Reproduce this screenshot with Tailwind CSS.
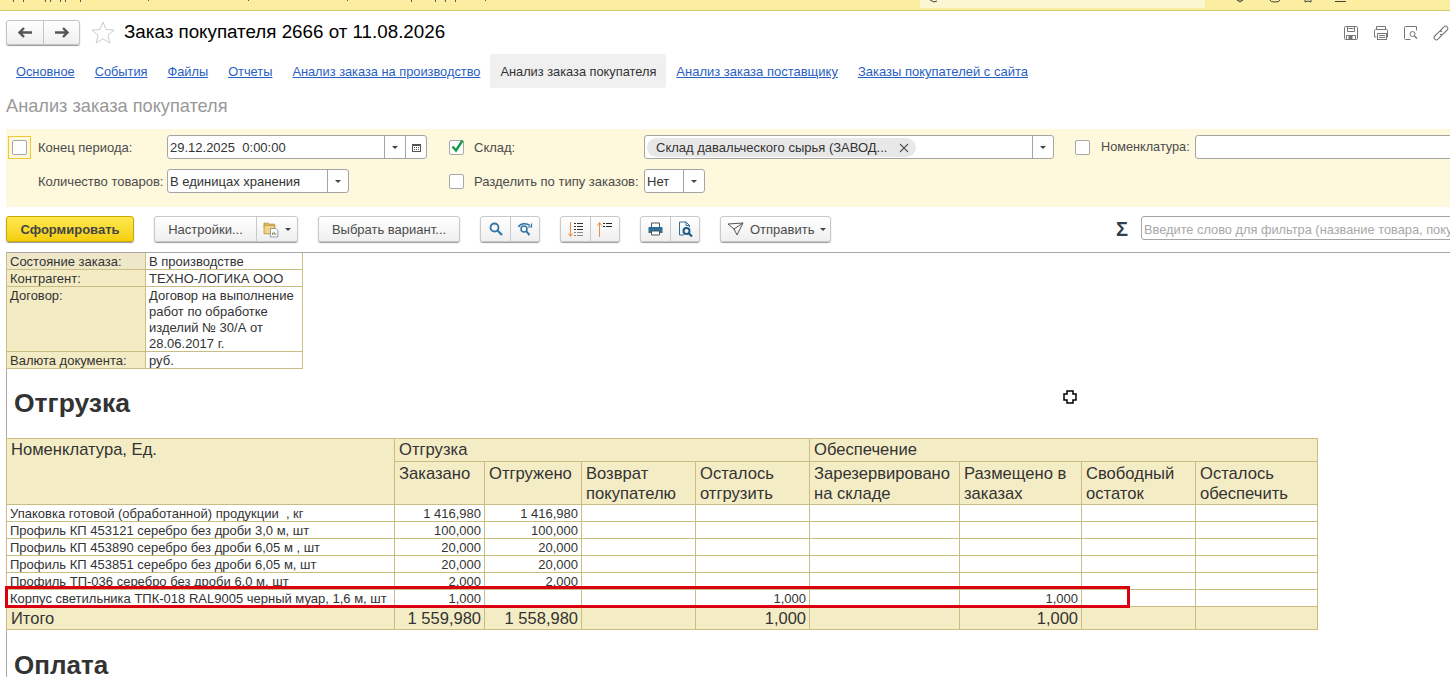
<!DOCTYPE html>
<html lang="ru">
<head>
    <meta charset="UTF-8">
    <title>Заказ покупателя 2666</title>
    <script src="https://cdn.jsdelivr.net/npm/@tailwindcss/browser@4"></script>
</head>
<body class="relative w-[1450px] h-[677px] overflow-hidden bg-white font-['Liberation_Sans',Arial,sans-serif] text-[#333]">

    <!-- Верхняя полоса -->
    <div class="relative h-[11px] bg-[#fbeea1] border-b border-[#d8c86c] flex justify-end pr-[245px]">
        <div class="w-[285px] h-[8px] bg-[#fdf6d3] rounded-b-[3px]"></div>
        <svg class="absolute left-0 top-0" width="1450" height="4" viewBox="0 0 1450 4" fill="none" stroke="#555">
            <path d="M13.500 0v2M23.500 0v2M45.500 0v2M50.500 0v2M60.500 0v2M65.500 0v2M80.500 0v2M148.500 0v1M248.500 0v1M347.500 0v1M411.500 0v2M435.500 0v2M445.500 0v2M455.500 0v2M485.500 0v1"/>
            <path d="M930 0l4 2 3-1M1237 0h6l-3 2zM1270 0a5 2 0 0 0 10 0M1305 0v2l3-1 3 1V0M1335 1.500h11" stroke="#444"/>
        </svg>
    </div>

    <!-- Заголовок -->
    <div class="h-[43px] pl-[6px] pr-[1px] flex items-center relative">
        <div class="w-[74px] h-[25px] flex rounded-[3px] border border-[#c4c4c4] bg-linear-to-b from-white to-[#efefef] shadow-[0_1px_1px_#999]">
            <div class="w-[37px] flex items-center justify-center border-r border-[#c4c4c4]">
                <svg width="15" height="11" viewBox="0 0 15 11"><path d="M1 5.500h13M6 1L1.500 5.500 6 10" fill="none" stroke="#555" stroke-width="2.400"/></svg>
            </div>
            <div class="flex-1 flex items-center justify-center">
                <svg width="15" height="11" viewBox="0 0 15 11"><path d="M1 5.500h13M9 1l4.500 4.500L9 10" fill="none" stroke="#555" stroke-width="2.400"/></svg>
            </div>
        </div>
        <svg class="ml-[11px]" width="24" height="23" viewBox="0 0 24 23"><path d="M12 1l3 7.500 8 .6-6.100 5.100 1.900 7.800L12 17.800 5.200 22l1.900-7.800L1 9.100l8-.6z" fill="none" stroke="#ccc" stroke-width="1"/></svg>
        <h1 class="ml-[9px] text-[18.800px] text-black">Заказ покупателя 2666 от 11.08.2026</h1>
        <div class="ml-auto flex items-center gap-[14px]">
            <svg width="16" height="16" viewBox="0 0 16 16" fill="none" stroke="#777"><rect x="1.500" y="1.500" width="13" height="13" rx="1"/><path d="M4.500 1.500v5h7v-5M5.500 3.500h5M3.500 14.500v-4h9v4"/><rect x="6" y="11.500" width="3" height="3" fill="#777"/></svg>
            <svg width="16" height="16" viewBox="0 0 16 16" fill="none" stroke="#777"><path d="M3.500 5V1.500h9V5M3.500 12h-2V5.500a1 1 0 0 1 1-1h11a1 1 0 0 1 1 1V12h-2"/><rect x="4.500" y="8.500" width="9" height="6"/><path d="M6 10.500h6M6 12.500h6"/></svg>
            <svg width="16" height="16" viewBox="0 0 16 16" fill="none" stroke="#777"><path d="M13.500 1.500h-11a1 1 0 0 0-1 1v11a1 1 0 0 0 1 1h5M13.500 1.500v4"/><circle cx="9.500" cy="9" r="2.500"/><path d="M11.500 11l2.500 2.500" stroke-width="1.500"/></svg>
            <svg width="16" height="16" viewBox="0 0 16 16" fill="none" stroke="#777" stroke-width="1.100"><path d="M7 6l4-4.200a2.100 2.100 0 0 1 3.200 3.200L10 9.200a2.100 2.100 0 0 1-3 0"/><path d="M9 10l-4 4.200A2.100 2.100 0 0 1 1.800 11L6 6.800a2.100 2.100 0 0 1 3 0"/></svg>
        </div>
    </div>

    <!-- Вкладки -->
    <nav class="h-[34px] flex items-center pl-[6px] text-[13px] text-[#2a5fc4]">
        <a href="#" class="px-[10px] pt-[2px] text-[12.800px] underline">Основное</a>
        <a href="#" class="px-[10px] pt-[2px] text-[12.800px] underline">События</a>
        <a href="#" class="px-[10px] pt-[2px] text-[12.800px] underline">Файлы</a>
        <a href="#" class="px-[10px] pt-[2px] text-[12.800px] underline">Отчеты</a>
        <a href="#" class="px-[10px] pt-[2px] text-[12.800px] underline">Анализ заказа на производство</a>
        <span class="h-[34px] px-[10px] pt-[2px] flex items-center bg-[#f0f0f0] rounded-[3px] text-[12.800px] text-[#333]">Анализ заказа покупателя</span>
        <a href="#" class="px-[10px] pt-[2px] underline">Анализ заказа поставщику</a>
        <a href="#" class="px-[10px] pt-[2px] underline">Заказы покупателей с сайта</a>
    </nav>

    <h2 class="h-[41px] pl-[6px] pt-[8px] text-[18.200px] leading-[20px] text-[#999]">Анализ заказа покупателя</h2>

    <!-- Отбор -->
    <div class="ml-[6px] h-[78px] bg-[#fef8dc] pt-[6px] text-[13px] text-[#4b4b4b]">
        <div class="flex items-center h-[24px] *:shrink-0">
            <div class="ml-[2px] w-[23px] h-[23px] border border-[#f0c832] flex items-center justify-center">
                <div class="w-[15px] h-[15px] bg-white border border-[#a8a8a8] rounded-[2px]"></div>
            </div>
            <span class="ml-[7px] w-[129px] pt-[2px]">Конец периода:</span>
            <div class="w-[260px] h-[24px] flex bg-white border border-[#a5a5a5] rounded-[3px]">
                <span class="flex-1 pl-[2px] leading-[24px] text-[#333]">29.12.2025&nbsp; 0:00:00</span>
                <span class="w-[21px] flex items-center justify-center border-l border-[#a5a5a5]"><span class="w-0 h-0 border-x-[3px] border-x-transparent border-t-[3px] border-t-[#444]"></span></span>
                <span class="w-[21px] flex items-center justify-center border-l border-[#a5a5a5]">
                    <svg width="9" height="9" viewBox="0 0 9 9"><path d="M0 1h9v8H0z" fill="#555"/><path d="M1 3h7v5H1z" fill="#fff"/><path d="M2 4h1v1H2zM4 4h1v1H4zM6 4h1v1H6zM2 6h1v1H2zM4 6h1v1H4zM6 6h1v1H6z" fill="#555"/></svg>
                </span>
            </div>
            <div class="ml-[22px] w-[15px] h-[15px] bg-white border border-[#a8a8a8] rounded-[2px] relative">
                <svg class="absolute -top-[2px] left-0" width="15" height="15" viewBox="0 0 15 15"><path d="M2.500 7.500l3.500 4 6.500-10" fill="none" stroke="#179a4a" stroke-width="2.400"/></svg>
            </div>
            <span class="ml-[10px] w-[170px] pt-[2px]">Склад:</span>
            <div class="w-[410px] h-[24px] flex bg-white border border-[#a5a5a5] rounded-[3px]">
                <div class="flex-1 pl-[2px] flex items-center">
                    <span class="w-[269px] h-[19px] rounded-full bg-[#e8e8e8] pl-[9px] pr-[7px] pt-px flex items-center justify-between text-[#333] whitespace-nowrap">Склад давальческого сырья (ЗАВОД...
                        <svg width="10" height="10" viewBox="0 0 10 10"><path d="M1 1l8 8M9 1l-8 8" stroke="#555" stroke-width="1.100"/></svg>
                    </span>
                </div>
                <span class="w-[21px] flex items-center justify-center border-l border-[#a5a5a5]"><span class="w-0 h-0 border-x-[3px] border-x-transparent border-t-[3px] border-t-[#444]"></span></span>
            </div>
            <div class="ml-[21px] w-[15px] h-[15px] bg-white border border-[#a8a8a8] rounded-[2px]"></div>
            <span class="ml-[11px] w-[94px] pt-[2px] text-[12.700px]">Номенклатура:</span>
            <div class="w-[300px] h-[24px] bg-white border border-[#a5a5a5] rounded-[3px]"></div>
        </div>
        <div class="mt-[10px] flex items-center h-[24px] *:shrink-0">
            <span class="ml-[32px] w-[129px] pt-[2px] whitespace-nowrap">Количество товаров:</span>
            <div class="w-[182px] h-[24px] flex bg-white border border-[#a5a5a5] rounded-[3px]">
                <span class="flex-1 pl-[2px] leading-[24px] text-[#333]">В единицах хранения</span>
                <span class="w-[21px] flex items-center justify-center border-l border-[#a5a5a5]"><span class="w-0 h-0 border-x-[3px] border-x-transparent border-t-[3px] border-t-[#444]"></span></span>
            </div>
            <div class="ml-[100px] w-[15px] h-[15px] bg-white border border-[#a8a8a8] rounded-[2px]"></div>
            <span class="ml-[10px] w-[170px] pt-[2px] whitespace-nowrap">Разделить по типу заказов:</span>
            <div class="w-[61px] h-[24px] flex bg-white border border-[#a5a5a5] rounded-[3px]">
                <span class="flex-1 pl-[2px] leading-[24px] text-[#333]">Нет</span>
                <span class="w-[21px] flex items-center justify-center border-l border-[#a5a5a5]"><span class="w-0 h-0 border-x-[3px] border-x-transparent border-t-[3px] border-t-[#444]"></span></span>
            </div>
        </div>
    </div>

    <!-- Панель команд -->
    <div class="h-[45px] pl-[6px] pt-[9px] flex items-start text-[13px] text-[#4b4b4b] *:shrink-0">
        <button class="w-[128px] h-[26px] pt-[2px] rounded-[3px] border border-[#c9a800] bg-linear-to-b from-[#ffe94d] to-[#f5cf00] shadow-[0_1px_1px_#999] font-bold text-[13px] text-[#444]">Сформировать</button>
        <div class="ml-[20px] w-[144px] h-[26px] flex rounded-[3px] border border-[#c8c8c8] bg-linear-to-b from-white to-[#efefef] shadow-[0_1px_1px_#999]">
            <span class="w-[102px] text-center leading-[26px] border-r border-[#c8c8c8]">Настройки...</span>
            <span class="flex-1 flex items-center justify-center gap-[5px]">
                <svg width="17" height="17" viewBox="0 0 16 16"><path d="M1 2h4l1 1h5v3H1z" fill="#e9c15f" stroke="#b8903a" stroke-width=".8"/><path d="M1 4h10v8H1z" fill="#f3d688" stroke="#b8903a" stroke-width=".8"/><path d="M7 7h5l2 2v6H7z" fill="#fff" stroke="#7e8d99" stroke-width=".8"/><path d="M9 13v-2" stroke="#d44"/><path d="M10.500 13v-3" stroke="#3a3"/><path d="M12 13v-1.500" stroke="#48c"/></svg>
                <span class="w-0 h-0 border-x-[3px] border-x-transparent border-t-[3px] border-t-[#444]"></span>
            </span>
        </div>
        <button class="ml-[20px] w-[142px] h-[26px] pt-[2px] rounded-[3px] border border-[#c8c8c8] bg-linear-to-b from-white to-[#efefef] shadow-[0_1px_1px_#999] whitespace-nowrap">Выбрать вариант...</button>
        <div class="ml-[20px] w-[60px] h-[26px] flex rounded-[3px] border border-[#c8c8c8] bg-linear-to-b from-white to-[#efefef] shadow-[0_1px_1px_#999]">
            <span class="w-[30px] flex items-center justify-center border-r border-[#c8c8c8]">
                <svg width="14" height="14" viewBox="0 0 14 14" fill="none" stroke="#2f76a6" stroke-width="1.800"><circle cx="5.500" cy="5.500" r="4"/><path d="M8.500 8.500l4.500 4.500" stroke-width="2.200"/></svg>
            </span>
            <span class="flex-1 flex items-center justify-center">
                <svg width="16" height="14" viewBox="0 0 16 14" fill="none" stroke="#2f76a6" stroke-width="1.500"><circle cx="7" cy="7" r="3"/><path d="M9.200 9.200l3.300 3.800" stroke-width="2"/><path d="M1.500 5C3 1.500 9 .5 13 3.500"/><path d="M14.500 1.500v3.500h-3.500" stroke-width="1.200"/></svg>
            </span>
        </div>
        <div class="ml-[20px] w-[60px] h-[26px] flex rounded-[3px] border border-[#c8c8c8] bg-linear-to-b from-white to-[#efefef] shadow-[0_1px_1px_#999]">
            <span class="w-[30px] flex items-center justify-center border-r border-[#c8c8c8]">
                <svg width="16" height="17" viewBox="0 0 16 17" fill="none"><path d="M2.500 1v14M.5 12.500l2 3 2-3" stroke="#f08a3c"/><path d="M6 2.500h2M9 2.500h6M6 5.500h2M9 5.500h6M6 8.500h2M9 8.500h6" stroke="#333"/><path d="M6 11.500h2M9 11.500h6M6 14.500h2M9 14.500h6" stroke="#888"/></svg>
            </span>
            <span class="flex-1 flex items-center justify-center">
                <svg width="16" height="17" viewBox="0 0 16 17" fill="none"><path d="M2.500 16V2M.5 4.500l2-3 2 3" stroke="#f08a3c"/><path d="M6 2.500h2M9 2.500h6M6 5.500h2M9 5.500h6" stroke="#222"/></svg>
            </span>
        </div>
        <div class="ml-[20px] w-[60px] h-[26px] flex rounded-[3px] border border-[#c8c8c8] bg-linear-to-b from-white to-[#efefef] shadow-[0_1px_1px_#999]">
            <span class="w-[30px] flex items-center justify-center border-r border-[#c8c8c8]">
                <svg width="15" height="14" viewBox="0 0 15 14"><path d="M3.500 5V1h8v4" fill="#fff" stroke="#555"/><path d="M1 5h13a.5.5 0 0 1 .5.5V11H.5V5.500A.5.5 0 0 1 1 5z" fill="#2f6e96"/><path d="M3.500 9h8v4h-8z" fill="#fff" stroke="#555"/></svg>
            </span>
            <span class="flex-1 flex items-center justify-center">
                <svg width="15" height="16" viewBox="0 0 15 16" fill="none"><path d="M8 1H1.500v13H6M8 1l3.500 3.500V6M8 1v3.500h3.500" stroke="#2f6e96"/><circle cx="8.500" cy="10" r="3" stroke="#1d5c86" stroke-width="2"/><path d="M11 12.500l3 3" stroke="#1d5c86" stroke-width="2.200"/></svg>
            </span>
        </div>
        <button class="ml-[20px] w-[111px] h-[26px] flex items-center pl-[6px] rounded-[3px] border border-[#c8c8c8] bg-linear-to-b from-white to-[#efefef] shadow-[0_1px_1px_#999]">
            <svg width="17" height="14" viewBox="0 0 17 14" fill="none" stroke="#555"><path d="M1 2l15-1-6 12-3-6zM7 7l9-6"/></svg>
            <span class="ml-[6px] pt-[2px]">Отправить</span>
            <span class="ml-[6px] w-0 h-0 border-x-[3px] border-x-transparent border-t-[3px] border-t-[#444]"></span>
        </button>
        <span class="ml-[285px] w-[25px] leading-[26px] text-[20px] font-bold text-[#2f4050]">Σ</span>
        <div class="w-[320px] h-[24px] border border-[#a5a5a5] rounded-[3px] pl-[2px] leading-[26px] text-[12.800px] text-[#a8a8a8] whitespace-nowrap overflow-hidden">Введите слово для фильтра (название товара, покупателя)</div>
    </div>

    <!-- Отчет -->
    <div class="ml-[6px] h-[425px] border-l border-t border-[#a8a8a8]">
        <table class="-ml-px table-fixed border-collapse w-[296px] text-[13px] leading-[16px]">
            <colgroup><col class="w-[139px]"><col class="w-[157px]"></colgroup>
            <tbody>
                <tr class="h-[16px]"><td class="border-x border-b border-[#c9bd84] bg-[#efe8c8] pl-[3px]"><span class="block translate-y-px">Состояние заказа:</span></td><td class="border-x border-b border-[#c9bd84] pl-[3px]"><span class="block translate-y-px">В производстве</span></td></tr>
                <tr class="h-[17px]"><td class="border border-[#c9bd84] bg-[#f3ebc4] pl-[3px]"><span class="block translate-y-px">Контрагент:</span></td><td class="border border-[#c9bd84] pl-[3px]"><span class="block translate-y-px">ТЕХНО-ЛОГИКА ООО</span></td></tr>
                <tr><td class="border border-[#c9bd84] bg-[#f3ebc4] pl-[3px] align-top"><span class="block translate-y-px">Договор:</span></td><td class="border border-[#c9bd84] pl-[3px]"><span class="block translate-y-px">Договор на выполнение работ по обработке изделий № 30/А от 28.06.2017 г.</span></td></tr>
                <tr class="h-[17px]"><td class="border border-[#c9bd84] bg-[#f3ebc4] pl-[3px]"><span class="block translate-y-px">Валюта документа:</span></td><td class="border border-[#c9bd84] pl-[3px]"><span class="block translate-y-px">руб.</span></td></tr>
            </tbody>
        </table>

        <h3 class="ml-[7px] mt-[19px] mb-[20px] text-[26.500px] leading-[30px] font-bold">Отгрузка</h3>

        <table class="-ml-px table-fixed border-collapse w-[1311px] text-[16.600px] leading-[20px]">
            <colgroup>
                <col class="w-[388px]"><col class="w-[90px]"><col class="w-[97px]"><col class="w-[114px]"><col class="w-[114px]"><col class="w-[150px]"><col class="w-[122px]"><col class="w-[114px]"><col class="w-[122px]">
            </colgroup>
            <thead class="bg-[#f4ecc5]">
                <tr class="h-[23px]">
                    <th rowspan="2" class="border border-[#c9bd84] font-normal text-left align-top pl-[4px] pt-px">Номенклатура, Ед.</th>
                    <th colspan="4" class="border border-[#c9bd84] font-normal text-left pl-[4px]">Отгрузка</th>
                    <th colspan="4" class="border border-[#c9bd84] font-normal text-left pl-[4px]">Обеспечение</th>
                </tr>
                <tr class="h-[43px]">
                    <th class="border border-[#c9bd84] font-normal text-left align-top pl-[4px] pt-[2px]">Заказано</th>
                    <th class="border border-[#c9bd84] font-normal text-left align-top pl-[4px] pt-[2px]">Отгружено</th>
                    <th class="border border-[#c9bd84] font-normal text-left align-top pl-[4px] pt-[2px]">Возврат покупателю</th>
                    <th class="border border-[#c9bd84] font-normal text-left align-top pl-[4px] pt-[2px]">Осталось отгрузить</th>
                    <th class="border border-[#c9bd84] font-normal text-left align-top pl-[4px] pt-[2px]">Зарезервировано на складе</th>
                    <th class="border border-[#c9bd84] font-normal text-left align-top pl-[4px] pt-[2px]">Размещено в заказах</th>
                    <th class="border border-[#c9bd84] font-normal text-left align-top pl-[4px] pt-[2px]">Свободный остаток</th>
                    <th class="border border-[#c9bd84] font-normal text-left align-top pl-[4px] pt-[2px]">Осталось обеспечить</th>
                </tr>
            </thead>
            <tbody id="rows" class="text-[13px] leading-[16px]"></tbody>
            <tfoot class="bg-[#f4ecc5] text-[16.500px]">
                <tr class="h-[23px]">
                    <td class="border border-[#c9bd84] pl-[4px]">Итого</td>
                    <td class="border border-[#c9bd84] text-right pr-[3px]">1 559,980</td>
                    <td class="border border-[#c9bd84] text-right pr-[3px]">1 558,980</td>
                    <td class="border border-[#c9bd84]"></td>
                    <td class="border border-[#c9bd84] text-right pr-[3px]">1,000</td>
                    <td class="border border-[#c9bd84]"></td>
                    <td class="border border-[#c9bd84] text-right pr-[3px]">1,000</td>
                    <td class="border border-[#c9bd84]"></td>
                    <td class="border border-[#c9bd84]"></td>
                </tr>
            </tfoot>
        </table>

        <h3 class="ml-[7px] mt-[20px] text-[26px] leading-[30px] font-bold">Оплата</h3>
    </div>

    <!-- Выделение и курсор поверх отчета -->
    <div class="absolute left-[5px] top-[586px] w-[1125px] h-[22px] border-[3px] border-[#d9000f]"></div>
    <svg class="absolute left-[1063px] top-[390px]" width="14" height="14" viewBox="0 0 14 14"><path d="M4 1h6v3h3v6h-3v3H4v-3H1V4h3z" fill="#fff" stroke="#000" stroke-width="1.500"/></svg>

    <script>
        // Строки отчета: номенклатура, заказано, отгружено, осталось отгрузить, размещено
        const data = [
            ['Упаковка готовой (обработанной) продукции \u00a0, кг', '1 416,980', '1 416,980', '', ''],
            ['Профиль КП 453121 серебро без дроби 3,0 м, шт', '100,000', '100,000', '', ''],
            ['Профиль КП 453890 серебро без дроби 6,05 м , шт', '20,000', '20,000', '', ''],
            ['Профиль КП 453851 серебро без дроби 6,05 м, шт', '20,000', '20,000', '', ''],
            ['Профиль ТП-036 серебро без дроби 6,0 м, шт', '2,000', '2,000', '', ''],
            ['Корпус светильника ТПК-018 RAL9005 черный муар, 1,6 м, шт', '1,000', '', '1,000', '1,000'],
        ];
        document.getElementById('rows').innerHTML = data.map(r => `
            <tr class="h-[17px]">
                <td class="border border-[#c9bd84] pl-[3px] whitespace-nowrap"><span class="block translate-y-px">${r[0]}</span></td>
                <td class="border border-[#c9bd84] text-right pr-[3px]"><span class="block translate-y-px">${r[1]}</span></td>
                <td class="border border-[#c9bd84] text-right pr-[3px]"><span class="block translate-y-px">${r[2]}</span></td>
                <td class="border border-[#c9bd84]"></td>
                <td class="border border-[#c9bd84] text-right pr-[3px]"><span class="block translate-y-px">${r[3]}</span></td>
                <td class="border border-[#c9bd84]"></td>
                <td class="border border-[#c9bd84] text-right pr-[3px]"><span class="block translate-y-px">${r[4]}</span></td>
                <td class="border border-[#c9bd84]"></td>
                <td class="border border-[#c9bd84]"></td>
            </tr>`).join('');
    </script>
</body>
</html>
